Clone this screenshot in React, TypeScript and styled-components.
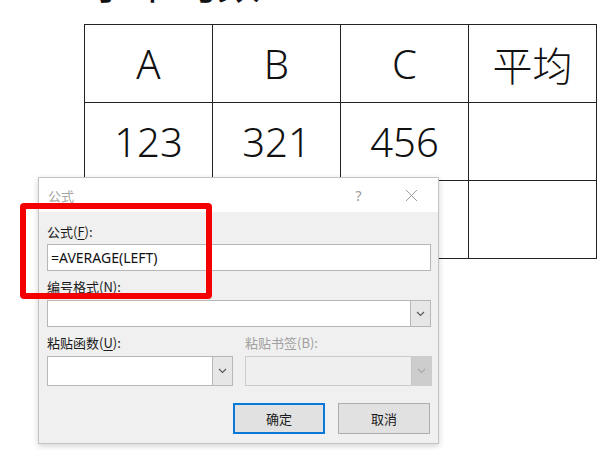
import * as React from 'react';
import styled, { createGlobalStyle } from 'styled-components';

const GlobalStyle = createGlobalStyle`
  html, body {
    margin: 0;
    padding: 0;
    background: #ffffff;
    overflow: hidden;
  }
  body {
    width: 600px;
    height: 450px;
    font-family: "Noto Sans", "Noto Sans CJK SC", sans-serif;
  }
`;

const Page = styled.div`
  position: relative;
  width: 600px;
  height: 450px;
  overflow: hidden;
`;

const Heading = styled.div`
  margin: -43px 0 0 88px;
  height: 47px;
  font-family: "Noto Sans CJK SC", sans-serif;
  font-size: 43px;
  line-height: 47px;
  color: #111;
  white-space: nowrap;
`;

const Table = styled.div`
  margin: 20px 0 0 84px;
  display: grid;
  grid-template-columns: repeat(4, 128px);
  grid-template-rows: repeat(3, 78px);
  width: 513px;
  border-top: 1px solid #222;
  border-left: 1px solid #222;
  box-sizing: border-box;
`;

const Cell = styled.div`
  display: flex;
  align-items: center;
  justify-content: center;
  border-right: 1px solid #222;
  border-bottom: 1px solid #222;
  font-family: "Noto Sans", "Noto Sans CJK SC", sans-serif;
  font-size: 40px;
  font-weight: 300;
  color: #111;
`;

const Dialog = styled.div`
  position: absolute;
  left: 38px;
  top: 177px;
  width: 401px;
  height: 267px;
  box-sizing: border-box;
  background: #f0f0f0;
  border: 1px solid #c4c4c4;
  box-shadow: 0 2px 6px rgba(0, 0, 0, 0.18);
  display: flex;
  flex-direction: column;
  font-family: "Noto Sans CJK SC", sans-serif;
  font-size: 13px;
  color: #1a1a1a;
`;

const TitleBar = styled.div`
  height: 34px;
  background: #ffffff;
  display: flex;
  align-items: center;
  padding: 0 0 0 9px;
  color: #a6a6a6;
  font-size: 13px;
`;

const Title = styled.span`
  flex: 1;
`;

const TitleButton = styled.span`
  width: 53px;
  display: flex;
  justify-content: center;
  color: #9a9a9a;
  font-family: "Noto Sans", sans-serif;
  font-size: 14px;
`;

const Body = styled.div`
  padding: 12px 7px 0 8px;
  display: flex;
  flex-direction: column;
`;

const Label = styled.div<{ $gap?: number; $disabled?: boolean }>`
  height: 16px;
  line-height: 16px;
  margin-top: ${p => p.$gap ?? 0}px;
  color: ${p => (p.$disabled ? '#a0a0a0' : '#1a1a1a')};
  white-space: nowrap;
`;

const Key = styled.span`
  text-decoration: underline;
  text-underline-offset: 2px;
`;

const TextBox = styled.div`
  margin-top: 4px;
  height: 27px;
  box-sizing: border-box;
  border: 1px solid #b7b7b7;
  background: #ffffff;
  display: flex;
  align-items: center;
  padding-left: 3px;
  font-family: "Noto Sans", "Noto Sans CJK SC", sans-serif;
  font-size: 14px;
  color: #111;
`;

const Combo = styled.div<{ $height: number; $disabled?: boolean }>`
  margin-top: 5px;
  height: ${p => p.$height}px;
  box-sizing: border-box;
  border: 1px solid ${p => (p.$disabled ? '#cccccc' : '#b7b7b7')};
  background: ${p => (p.$disabled ? '#efefef' : '#ffffff')};
  display: flex;
  justify-content: flex-end;
`;

const DropButton = styled.div<{ $disabled?: boolean }>`
  width: 19px;
  border-left: 1px solid ${p => (p.$disabled ? '#c4c4c4' : '#b7b7b7')};
  background: ${p => (p.$disabled ? '#cdcdcd' : '#e6e6e6')};
  display: flex;
  align-items: center;
  justify-content: center;
`;

const Columns = styled.div`
  display: grid;
  grid-template-columns: 186px 187px;
  column-gap: 12px;
`;

const Column = styled.div`
  display: flex;
  flex-direction: column;
`;

const Buttons = styled.div`
  margin-top: 17px;
  display: flex;
  justify-content: flex-end;
  gap: 13px;
  padding-right: 1px;
`;

const Button = styled.div<{ $primary?: boolean }>`
  width: 92px;
  height: 31px;
  box-sizing: border-box;
  border: ${p => (p.$primary ? '2px solid #0a78d7' : '1px solid #adadad')};
  background: #e1e1e1;
  display: flex;
  align-items: center;
  justify-content: center;
  color: #1a1a1a;
  font-size: 13px;
`;

const Annotation = styled.div`
  position: absolute;
  left: 20px;
  top: 203px;
  width: 192px;
  height: 96px;
  box-sizing: border-box;
  border: 6px solid #f40000;
  border-radius: 4px;
`;

const Chevron = ({ color }: { color: string }) => (
  <svg width="9" height="6" viewBox="0 0 9 6">
    <path d="M1 1 L4.5 4.5 L8 1" fill="none" stroke={color} strokeWidth="1.1" />
  </svg>
);

const CloseIcon = () => (
  <svg width="13" height="13" viewBox="0 0 13 13">
    <path d="M1 1 L12 12 M12 1 L1 12" stroke="#9a9a9a" strokeWidth="1" fill="none" />
  </svg>
);

const rows = [
  ['A', 'B', 'C', '平均'],
  ['123', '321', '456', ''],
  ['', '', '', ''],
];

const App = () => {
  return (
    <Page>
      <GlobalStyle />
      <Heading>求平均数</Heading>
      <Table>
        {rows.flat().map((text, i) => (
          <Cell key={i}>{text}</Cell>
        ))}
      </Table>

      <Dialog>
        <TitleBar>
          <Title>公式</Title>
          <TitleButton>?</TitleButton>
          <TitleButton>
            <CloseIcon />
          </TitleButton>
        </TitleBar>
        <Body>
          <Label>公式(<Key>F</Key>):</Label>
          <TextBox>=AVERAGE(LEFT)</TextBox>
          <Label $gap={8}>编号格式(<Key>N</Key>):</Label>
          <Combo $height={27}>
            <DropButton>
              <Chevron color="#555" />
            </DropButton>
          </Combo>
          <Columns>
            <Column>
              <Label $gap={8}>粘贴函数(<Key>U</Key>):</Label>
              <Combo $height={30}>
                <DropButton>
                  <Chevron color="#555" />
                </DropButton>
              </Combo>
            </Column>
            <Column>
              <Label $gap={8} $disabled>粘贴书签(B):</Label>
              <Combo $height={30} $disabled>
                <DropButton $disabled>
                  <Chevron color="#a8a8a8" />
                </DropButton>
              </Combo>
            </Column>
          </Columns>
          <Buttons>
            <Button $primary>确定</Button>
            <Button>取消</Button>
          </Buttons>
        </Body>
      </Dialog>

      <Annotation />
    </Page>
  );
};

export default App;
